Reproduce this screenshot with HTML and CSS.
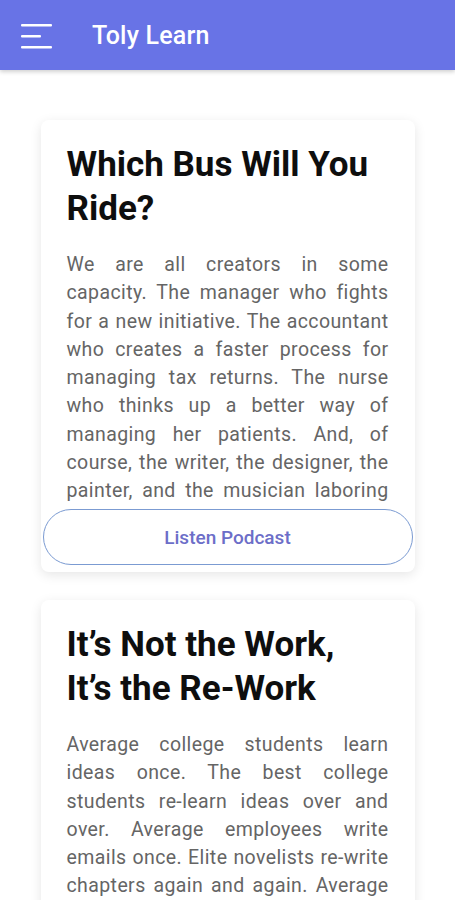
FILE: index.html
```html
<!DOCTYPE html>
<html>
<head>
<meta charset="utf-8">
<link rel="stylesheet" href="styles.css">
</head>
<body>
<header class="appbar">
  <svg class="menu" width="32" height="26" viewBox="0 0 32 26">
    <rect x="0" y="1" width="31" height="2.4" rx="1" fill="#fff"/>
    <rect x="0" y="12" width="20" height="2.4" rx="1" fill="#fff"/>
    <rect x="0" y="23" width="31" height="2.4" rx="1" fill="#fff"/>
  </svg>
  <span class="title">Toly Learn</span>
</header>
<main class="list">
  <article class="card">
    <h2 class="card-title">Which Bus Will You Ride?</h2>
    <p class="card-body">We are all creators in some capacity. The manager who fights for a new initiative. The accountant who creates a faster process for managing tax returns. The nurse who thinks up a better way of managing her patients. And, of course, the writer, the designer, the painter, and the musician laboring over their craft every single day to make something new and meaningful for the world.</p>
    <button class="listen">Listen Podcast</button>
  </article>
  <article class="card">
    <h2 class="card-title">It’s Not the Work, It’s the Re-Work</h2>
    <p class="card-body">Average college students learn ideas once. The best college students re-learn ideas over and over. Average employees write emails once. Elite novelists re-write chapters again and again. Average athletes perform a move once and think they have it.</p>
    <button class="listen">Listen Podcast</button>
  </article>
</main>
</body>
</html>
```
FILE: styles.css
```css
* { box-sizing: border-box; }
html, body { margin: 0; padding: 0; }
body {
  background: #ffffff;
  font-family: Roboto, "Liberation Sans", sans-serif;
  width: 455px;
  height: 900px;
  overflow: hidden;
}
.appbar {
  height: 70px;
  background: #6873e6;
  display: flex;
  align-items: center;
  padding-left: 21px;
  box-shadow: 0 2px 4px rgba(0,0,0,0.18);
  position: relative;
  z-index: 1;
}
.menu { display: block; margin-top: 2px; }
.title {
  color: #ffffff;
  font-size: 25px;
  font-weight: 500;
  margin-left: 39px;
  letter-spacing: 0.2px;
}
.list {
  display: flex;
  flex-direction: column;
  align-items: center;
  gap: 28px;
  padding-top: 50px;
}
.card {
  width: 374px;
  background: #fff;
  border-radius: 8px;
  box-shadow: 0 3px 12px rgba(0,0,0,0.10);
  padding: 22px 2px 7px;
  display: flex;
  flex-direction: column;
}
.card-title {
  margin: 1px 0 0;
  padding: 0 30px 0 24px;
  font-size: 35px;
  line-height: 44px;
  font-weight: 700;
  color: #0e0e0e;
}
.card-body {
  margin: 20px 0 0;
  padding: 0 24px;
  font-size: 19.5px;
  line-height: 28.3px;
  color: #656565;
  text-align: justify;
  height: 256px;
  overflow: hidden;
  letter-spacing: 0.4px;
}
.listen {
  margin-top: 2px;
  height: 56px;
  width: 100%;
  border: 1.5px solid #7b9bd2;
  border-radius: 28px;
  background: #fff;
  color: #6c6ec8;
  font-family: Roboto, "Liberation Sans", sans-serif;
  font-size: 19px;
  font-weight: 500;
}
```
